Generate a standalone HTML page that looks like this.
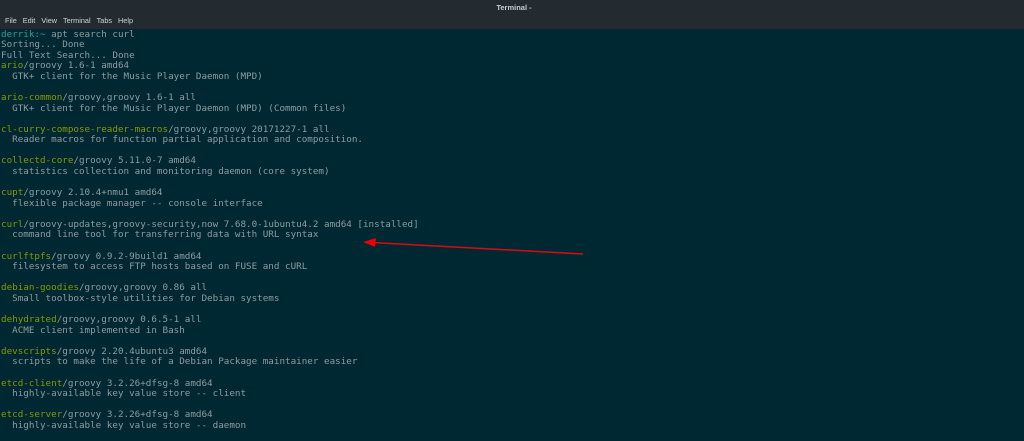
<!DOCTYPE html>
<html><head><meta charset="utf-8"><style>
html,body{margin:0;padding:0;width:1024px;height:441px;overflow:hidden;background:#002833;}
#hdr{position:absolute;left:0;top:0;width:1024px;height:29px;background:#232b31;}
#title{position:absolute;left:0;width:1024px;top:3px;text-align:center;font:bold 7.5px "Liberation Sans",sans-serif;color:#c8cccf;text-indent:4px}
#menu{position:absolute;left:5px;top:16px;font:7.3px "Liberation Sans",sans-serif;color:#d0d4d6;word-spacing:0}
#menu span{margin-right:6px}
pre{position:absolute;left:1px;top:29.5px;margin:0;font:9.25px/10.58px "DejaVu Sans Mono",monospace;color:#8d9c9e;}
.g{color:#859900}.t{color:#2aa198}
</style></head><body>
<div id="hdr"><div id="title">Terminal -</div><div id="menu"><span>File</span><span>Edit</span><span>View</span><span>Terminal</span><span>Tabs</span><span>Help</span></div></div>
<pre><span class="t">derrik:~</span> apt search curl
Sorting... Done
Full Text Search... Done
<span class="g">ario</span>/groovy 1.6-1 amd64
  GTK+ client for the Music Player Daemon (MPD)

<span class="g">ario-common</span>/groovy,groovy 1.6-1 all
  GTK+ client for the Music Player Daemon (MPD) (Common files)

<span class="g">cl-curry-compose-reader-macros</span>/groovy,groovy 20171227-1 all
  Reader macros for function partial application and composition.

<span class="g">collectd-core</span>/groovy 5.11.0-7 amd64
  statistics collection and monitoring daemon (core system)

<span class="g">cupt</span>/groovy 2.10.4+nmu1 amd64
  flexible package manager -- console interface

<span class="g">curl</span>/groovy-updates,groovy-security,now 7.68.0-1ubuntu4.2 amd64 [installed]
  command line tool for transferring data with URL syntax

<span class="g">curlftpfs</span>/groovy 0.9.2-9build1 amd64
  filesystem to access FTP hosts based on FUSE and cURL

<span class="g">debian-goodies</span>/groovy,groovy 0.86 all
  Small toolbox-style utilities for Debian systems

<span class="g">dehydrated</span>/groovy,groovy 0.6.5-1 all
  ACME client implemented in Bash

<span class="g">devscripts</span>/groovy 2.20.4ubuntu3 amd64
  scripts to make the life of a Debian Package maintainer easier

<span class="g">etcd-client</span>/groovy 3.2.26+dfsg-8 amd64
  highly-available key value store -- client

<span class="g">etcd-server</span>/groovy 3.2.26+dfsg-8 amd64
  highly-available key value store -- daemon
</pre>
<svg style="position:absolute;left:0;top:0" width="1024" height="441">
<line x1="583" y1="254" x2="372" y2="242.5" stroke="#d60d0d" stroke-width="1.5"/>
<polygon points="363,242 376,238 375,247" fill="#e00"/>
</svg>
</body></html>
